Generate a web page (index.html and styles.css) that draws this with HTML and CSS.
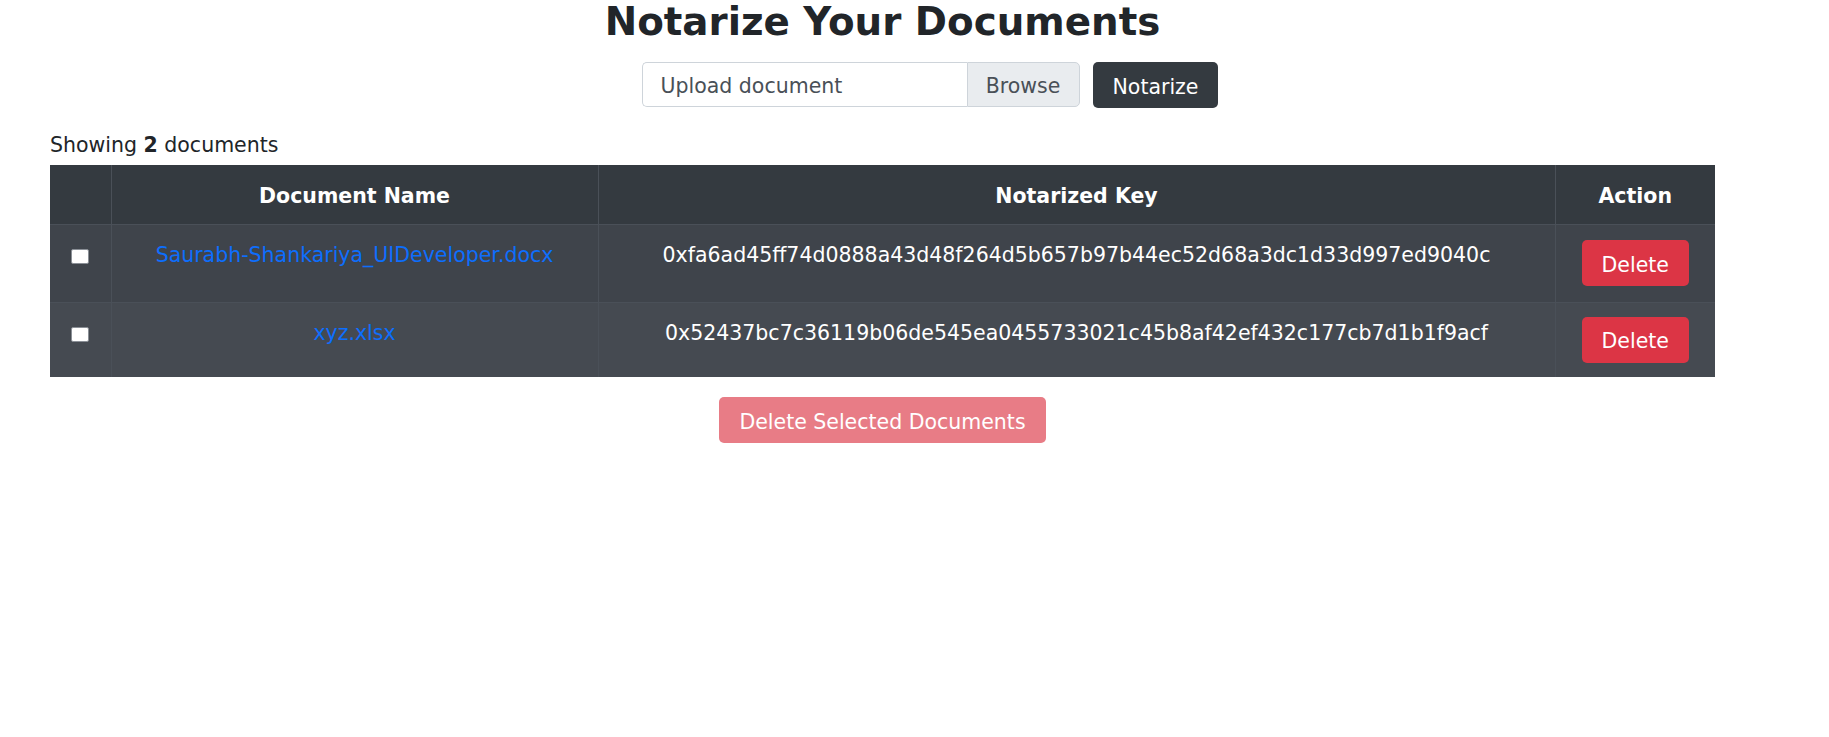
FILE: index.html
```html
<!DOCTYPE html>
<html lang="en">
<head>
<meta charset="utf-8">
<title>Notarize Your Documents</title>
<link rel="stylesheet" href="styles.css">
</head>
<body>
<main class="page">
  <h1 class="title">Notarize Your Documents</h1>
  <form class="upload-row">
    <div class="input-group">
      <div class="file-input">Upload document</div>
      <div class="browse">Browse</div>
    </div>
    <button type="button" class="btn btn-dark">Notarize</button>
  </form>
  <p class="count">Showing <strong>2</strong> documents</p>
  <table class="docs">
    <colgroup>
      <col class="c-check">
      <col class="c-name">
      <col class="c-key">
      <col class="c-action">
    </colgroup>
    <thead>
      <tr>
        <th></th>
        <th>Document Name</th>
        <th>Notarized Key</th>
        <th>Action</th>
      </tr>
    </thead>
    <tbody>
      <tr class="row-a">
        <td><input type="checkbox" class="check"></td>
        <td><a href="#" class="doc-link">Saurabh-Shankariya_UIDeveloper.docx</a></td>
        <td>0xfa6ad45ff74d0888a43d48f264d5b657b97b44ec52d68a3dc1d33d997ed9040c</td>
        <td class="action"><button type="button" class="btn btn-danger">Delete</button></td>
      </tr>
      <tr class="row-b">
        <td><input type="checkbox" class="check"></td>
        <td><a href="#" class="doc-link">xyz.xlsx</a></td>
        <td>0x52437bc7c36119b06de545ea0455733021c45b8af42ef432c177cb7d1b1f9acf</td>
        <td class="action"><button type="button" class="btn btn-danger">Delete</button></td>
      </tr>
    </tbody>
  </table>
  <div class="bulk">
    <button type="button" class="btn btn-danger disabled" disabled>Delete Selected Documents</button>
  </div>
</main>
</body>
</html>
```

FILE: styles.css
```css
* { box-sizing: border-box; }

html, body {
  margin: 0;
  background: #fff;
}

body {
  font-family: "DejaVu Sans", "Liberation Sans", sans-serif;
  font-size: 20.5px;
  line-height: 30px;
  color: #212529;
}

.page {
  width: 1665px;
  margin-left: 50px;
}

.title {
  margin: 0 0 19px;
  font-size: 38.8px;
  line-height: 43px;
  font-weight: 700;
  text-align: center;
  color: #212529;
}

.upload-row {
  display: flex;
  justify-content: center;
  align-items: flex-start;
  gap: 13px;
  padding-left: 95px;
  margin: 0;
}

.input-group {
  display: flex;
  height: 45px;
}

.file-input {
  width: 325px;
  height: 45px;
  padding: 3px 18px 0;
  border: 1px solid #ced4da;
  border-right: none;
  border-radius: 5px 0 0 5px;
  color: #495057;
  display: flex;
  align-items: center;
}

.browse {
  width: 113px;
  height: 45px;
  padding-top: 3px;
  border: 1px solid #ced4da;
  border-radius: 0 5px 5px 0;
  background: #e9ecef;
  color: #495057;
  display: flex;
  align-items: center;
  justify-content: center;
}

.btn {
  font-family: inherit;
  font-size: 20.5px;
  height: 46px;
  padding: 3px 20px 0;
  border: none;
  border-radius: 5px;
  color: #fff;
  cursor: pointer;
}

.btn-dark { background: #343a40; }
.btn-danger { background: #dc3545; }
.btn-danger.disabled { background: #e87c86; cursor: default; }

.count {
  margin: 22px 0 5px;
}

.docs {
  width: 1665px;
  border-collapse: collapse;
  table-layout: fixed;
  color: #fff;
}

.c-check { width: 61px; }
.c-name { width: 487px; }
.c-key { width: 957px; }
.c-action { width: 160px; }

.docs th,
.docs td {
  border: 1px solid #4a5058;
  text-align: center;
  padding: 15px 14px 0;
  vertical-align: top;
}

.docs tr > :first-child { border-left: none; }
.docs tr > :last-child { border-right: none; }
.docs thead th { border-top: none; }
.docs tbody tr:last-child td { border-bottom: none; }

.docs thead tr { height: 59px; background: #343a40; }
.docs th {
  vertical-align: middle;
  padding: 4px 14px 0;
  font-weight: 700;
}

.row-a { height: 78px; background: #3f444b; }
.row-b { height: 75px; background: #454a51; }

.docs td.action {
  vertical-align: middle;
  padding: 0 14px;
}

.doc-link {
  color: #0d6efd;
  text-decoration: none;
}

.check {
  appearance: none;
  -webkit-appearance: none;
  display: block;
  width: 18px;
  height: 15px;
  margin: 9px auto 0;
  background: #fff;
  border: 1px solid #8a8f96;
  border-radius: 2px;
}

.bulk {
  display: flex;
  justify-content: center;
  margin-top: 20px;
}
```
